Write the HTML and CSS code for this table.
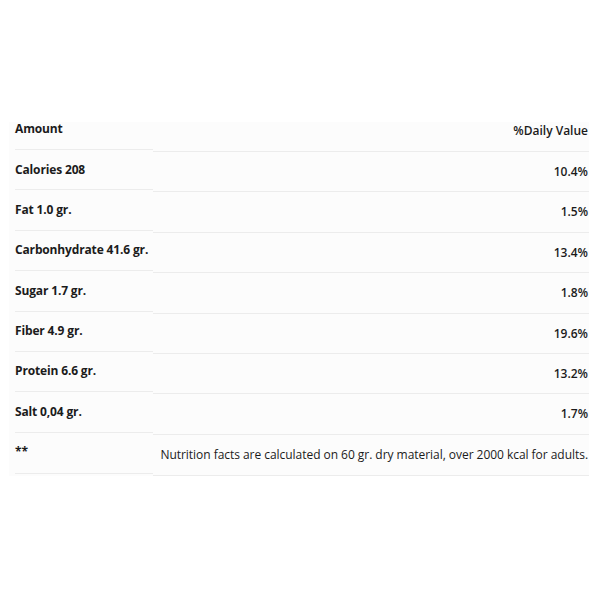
FILE: index.html
```html
<!DOCTYPE html>
<html>
<head>
<meta charset="utf-8">
<link rel="stylesheet" href="styles.css">
</head>
<body>
<div class="panel">
  <div class="facts">
    <div class="cell label head">Amount</div>
    <div class="cell value head">%Daily Value</div>
    <div class="cell label">Calories 208</div>
    <div class="cell value">10.4%</div>
    <div class="cell label">Fat 1.0 gr.</div>
    <div class="cell value">1.5%</div>
    <div class="cell label">Carbonhydrate 41.6 gr.</div>
    <div class="cell value">13.4%</div>
    <div class="cell label">Sugar 1.7 gr.</div>
    <div class="cell value">1.8%</div>
    <div class="cell label">Fiber 4.9 gr.</div>
    <div class="cell value">19.6%</div>
    <div class="cell label">Protein 6.6 gr.</div>
    <div class="cell value">13.2%</div>
    <div class="cell label">Salt 0,04 gr.</div>
    <div class="cell value">1.7%</div>
    <div class="cell label note">**</div>
    <div class="cell value note">Nutrition facts are calculated on 60 gr. dry material, over 2000 kcal for adults.</div>
  </div>
</div>
</body>
</html>
```

FILE: styles.css
```css
html, body {
  margin: 0;
  padding: 0;
  background: #ffffff;
}

body {
  font-family: "Open Sans", "Lato", sans-serif;
  color: #1b1b1b;
  font-size: 12px;
}

.panel {
  margin: 122px 11px 0 9px;
  padding: 0 0 0 6px;
  background: #fcfcfc;
}

.facts {
  display: grid;
  grid-template-columns: 138px minmax(0, 1fr);
  grid-template-rows: 30px repeat(7, 40.4px) 41.2px;
}

.cell {
  box-sizing: border-box;
  line-height: 16px;
  padding-top: 10px;
  border-bottom: 1px solid #ececec;
  white-space: nowrap;
}

.label {
  font-weight: 700;
  margin-bottom: 2px;
  padding-top: 9.5px;
  letter-spacing: -0.15px;
}

.value {
  margin-top: 2px;
  text-align: right;
  padding-left: 6px;
  padding-right: 1px;
  font-weight: 600;
}

.head {
  padding-top: 0;
  line-height: 14px;
}

.value.note {
  font-weight: 500;
  letter-spacing: -0.04px;
}
```
